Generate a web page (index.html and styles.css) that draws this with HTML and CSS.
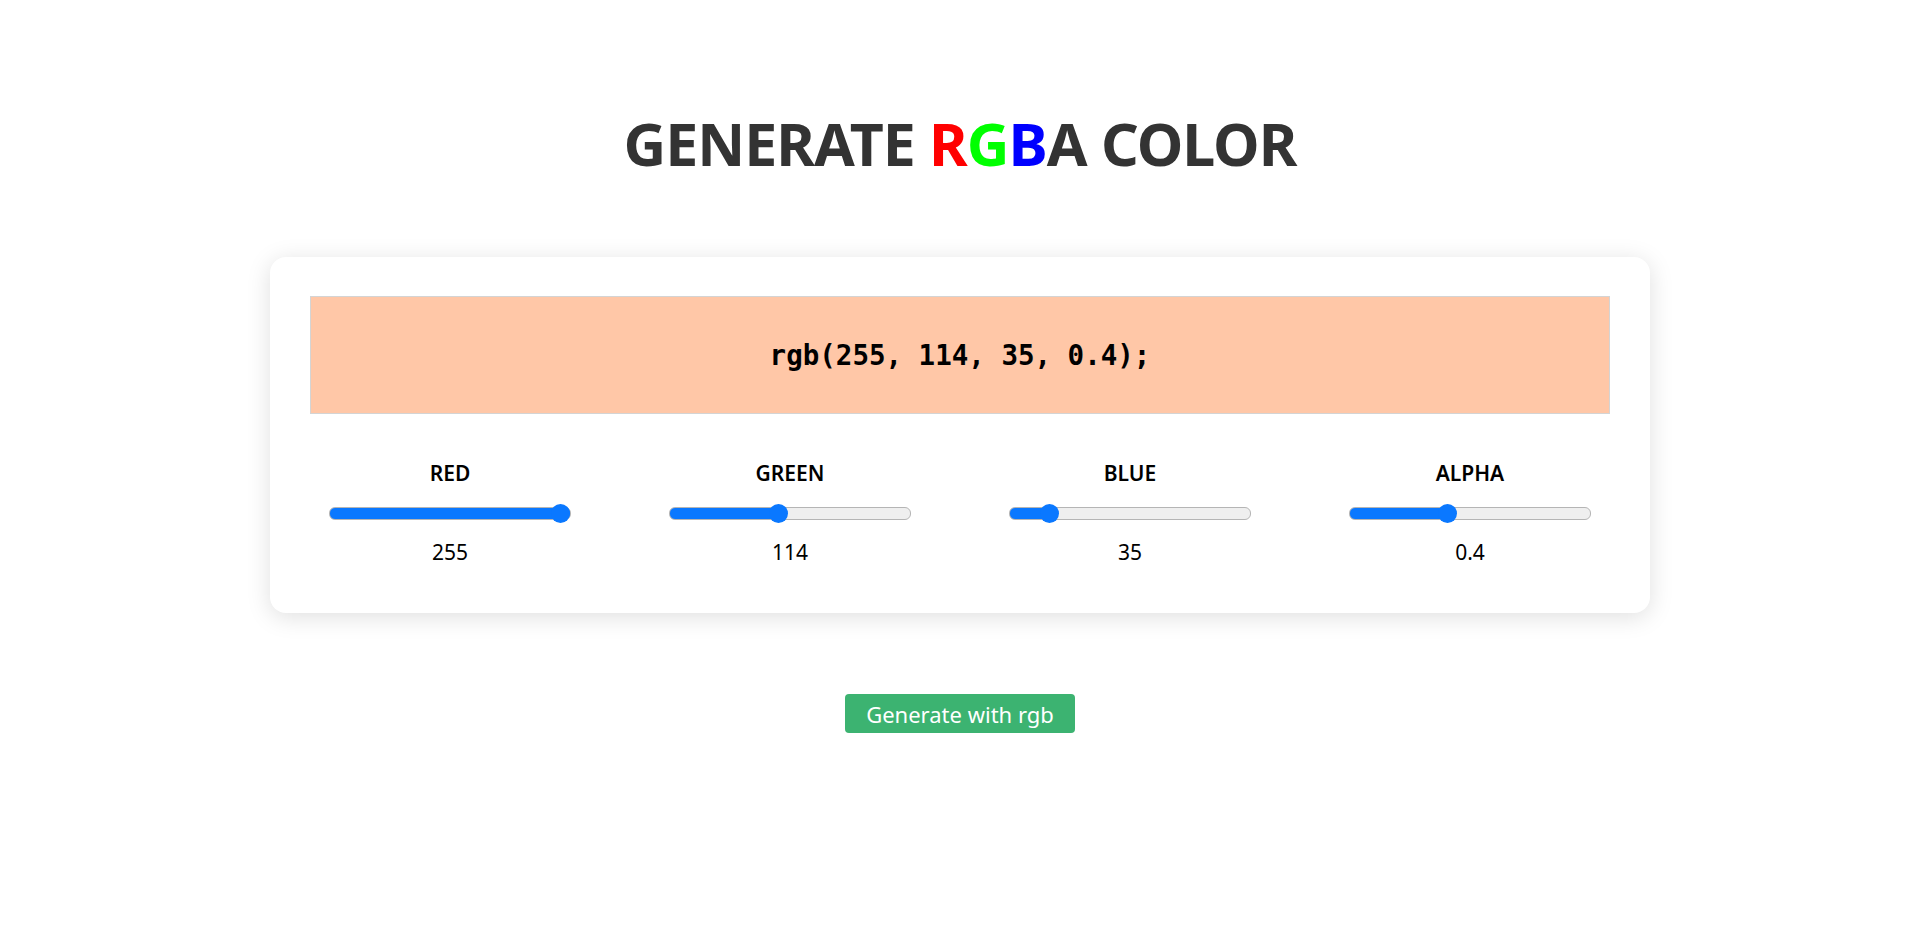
FILE: index.html
```html
<!DOCTYPE html>
<html lang="en">
<head>
<meta charset="utf-8">
<title>Generate RGBA Color</title>
<link rel="stylesheet" href="styles.css">
</head>
<body>
<main class="page">
  <h1 class="title">GENERATE <span class="r">R</span><span class="g">G</span><span class="b">B</span>A COLOR</h1>
  <section class="card">
    <div class="preview"><code class="code">rgb(255, 114, 35, 0.4);</code></div>
    <div class="controls">
      <div class="control">
        <label class="label" for="red">RED</label>
        <input class="range" id="red" type="range" min="0" max="255" value="255" style="background-size: 100% 100%">
        <span class="value">255</span>
      </div>
      <div class="control">
        <label class="label" for="green">GREEN</label>
        <input class="range" id="green" type="range" min="0" max="255" value="114" style="background-size: 44.7% 100%">
        <span class="value">114</span>
      </div>
      <div class="control">
        <label class="label" for="blue">BLUE</label>
        <input class="range" id="blue" type="range" min="0" max="255" value="35" style="background-size: 13.7% 100%">
        <span class="value">35</span>
      </div>
      <div class="control">
        <label class="label" for="alpha">ALPHA</label>
        <input class="range" id="alpha" type="range" min="0" max="1" step="0.1" value="0.4" style="background-size: 40% 100%">
        <span class="value">0.4</span>
      </div>
    </div>
  </section>
  <button class="btn" type="button">Generate with rgb</button>
</main>
</body>
</html>
```

FILE: styles.css
```css
html, body {
  margin: 0;
  padding: 0;
  background: #fff;
}

body {
  font-family: "Noto Sans", "Open Sans", sans-serif;
  color: #000;
}

.page {
  display: flex;
  flex-direction: column;
  align-items: center;
  padding-top: 95px;
}

.title {
  margin: 0;
  font-size: 59px;
  line-height: 96px;
  font-weight: 700;
  color: #333;
  letter-spacing: -1px;
}

.r { color: #ff0000; }
.g { color: #00ff00; }
.b { color: #0000ff; }

.card {
  box-sizing: border-box;
  width: 1380px;
  margin-top: 66px;
  padding: 39px 40px 47px;
  background: #fff;
  border-radius: 16px;
  box-shadow: 0 4px 24px rgba(0, 0, 0, 0.13);
}

.preview {
  height: 116px;
  border: 1px solid #d4d4d4;
  background: rgba(255, 114, 35, 0.4);
  display: flex;
  align-items: center;
  justify-content: center;
}

.code {
  font-family: "DejaVu Sans Mono", "Liberation Mono", monospace;
  font-weight: 700;
  font-size: 27.5px;
  color: #000;
}

.controls {
  display: flex;
  justify-content: space-between;
  margin-top: 45px;
}

.control {
  width: 280px;
  display: flex;
  flex-direction: column;
  align-items: center;
}

.label {
  font-size: 21px;
  font-weight: 600;
  line-height: 28px;
}

.range {
  -webkit-appearance: none;
  appearance: none;
  width: 240px;
  height: 11px;
  margin: 20px 0 18px;
  border: 1px solid #b5b5b5;
  border-radius: 6px;
  background-color: #efefef;
  background-image: linear-gradient(#0a78ff, #0a78ff);
  background-repeat: no-repeat;
  outline: none;
}

.range::-webkit-slider-thumb {
  -webkit-appearance: none;
  appearance: none;
  width: 19px;
  height: 19px;
  border-radius: 50%;
  background: #0a78ff;
  border: none;
}

.value {
  font-size: 21px;
  line-height: 28px;
}

.btn {
  margin-top: 81px;
  width: 230px;
  height: 39px;
  border: none;
  border-radius: 4px;
  background: #3cb371;
  color: #fff;
  font-family: "Noto Sans", "Open Sans", sans-serif;
  font-size: 22px;
  padding: 0;
}
```
